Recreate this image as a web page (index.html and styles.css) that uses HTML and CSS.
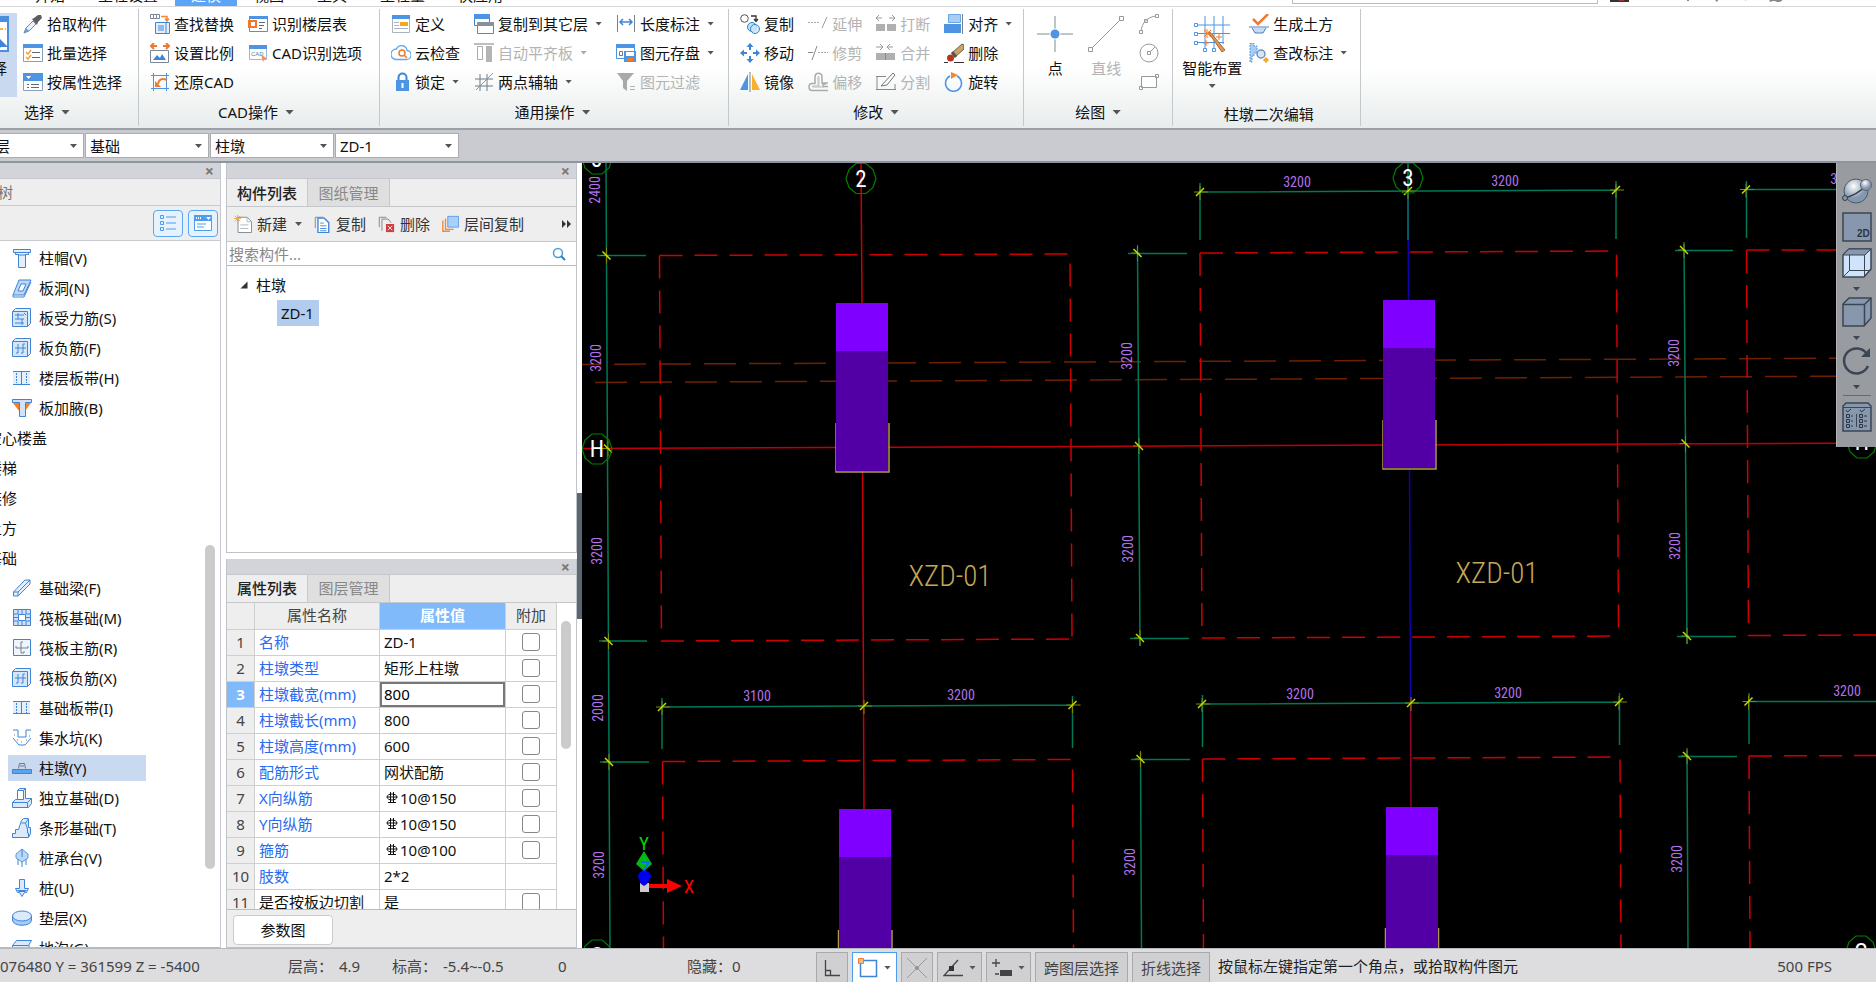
FILE: index.html
```html
<!DOCTYPE html>
<html lang="zh-CN">
<head>
    <meta charset="UTF-8">
    <meta name="viewport" content="width=device-width, initial-scale=1.0">
    <title>柱墩 ZD-1</title>
    <link rel="stylesheet" href="styles.css">
</head>
<body>
<div class="window">

    <!-- Menu tabs -->
    <nav class="tabs">
        <a href="#">开始</a>
        <a href="#">工程设置</a>
        <a href="#" class="active">建模</a>
        <a href="#">视图</a>
        <a href="#">工具</a>
        <a href="#">工程量</a>
        <a href="#">快应用</a>
        <div class="tabs-right">
            <span class="search-top"></span>
            <svg width="266" height="7" viewBox="0 0 266 7">
                <path d="M0 0h19v3H0z" fill="#3a3030"/><path d="M9 0h5v2H9z" fill="#a33"/>
                <path d="M24 0h4m3 0h4m3 0h4m3 0h4m3 0h4m3 0h6" stroke="#333" stroke-width="2"/>
                <path d="M77 0h2v2h-2zM104 0h5l-2 3zM134 2l4-2h2zM159 0h13v2l-3 1h-2l-2-1h-2l-3 1zM187 0h3v1h-3zM217 0h11v1h-11zM242 0h16v1h-16z" fill="#888"/>
            </svg>
        </div>
    </nav>

    <!-- Ribbon -->
    <header class="ribbon">
        <section class="group">
            <div class="group-body">
                <button class="big pressed">
                    <svg width="36" height="36" viewBox="0 0 36 36"><path d="M2 1h32v34H2z" fill="#fff" stroke="#4a8fdc" stroke-width="2"/><path d="M2 1h32v5H2z" fill="#4a8fdc"/><path d="M6 13h26" stroke="#f5b83d" stroke-width="2" stroke-dasharray="3 2"/><path d="M21 18l13 13h-7l-6 4z" fill="#3f84d6"/></svg>
                    <span>选择</span>
                </button>
                <div class="col">
                    <button class="tool"><svg class="icon" viewBox="0 0 20 20"><path d="M1 19l2-5 7-7 3 3-7 7z" fill="#e8f1fb" stroke="#7a8794"/><path d="M1 19l2-5 3 3z" fill="#5aa0ea"/><path d="M9 5l2-1 4-3 3 0 1 3-4 4-1 3z" fill="#5d5d5d"/></svg>拾取构件</button>
                    <button class="tool"><svg class="icon" viewBox="0 0 20 20"><path d="M.5 1.500h19v17H.5z" fill="#fff" stroke="#8aa0b8"/><path d="M0 1h20v4H0z" fill="#4d94e3"/><path d="M3 9l2 2 3-4M3 14l2 2 3-4" fill="none" stroke="#f2a33c" stroke-width="1.500"/><path d="M9 9.500h8M9 14.500h8" stroke="#5e6b78"/></svg>批量选择</button>
                    <button class="tool"><svg class="icon" viewBox="0 0 20 20"><path d="M.5 1.500h19v17H.5z" fill="#fff" stroke="#8aa0b8"/><path d="M0 1h20v8H0z" fill="#4d94e3"/><path d="M3 4h5L5.500 7z" fill="#fff"/><path d="M4 12.500h2m2 0h8M4 15.500h2m2 0h8" stroke="#5e6b78"/></svg>按属性选择</button>
                </div>
            </div>
            <button class="group-label left">选择<i class="caret big-caret"></i></button>
        </section>

        <section class="group cad">
            <div class="group-body">
                <div class="col">
                    <button class="tool"><svg class="icon" viewBox="0 0 20 20"><path d="M.5.5h9v4h-9zM3.500.5v4m3-4v4" fill="none" stroke="#7b8794"/><path d="M11 2.500h6v4m-2-2l2 2.500 2-2.500" fill="none" stroke="#ee8a3a" stroke-width="1.500"/><path d="M5.500 8.500h14v11h-14zM8 12h6m-6 2h6m-6 2h6m2-7v10" fill="#e4effc" stroke="#3f84d6"/></svg>查找替换</button>
                    <button class="tool"><svg class="icon" viewBox="0 0 20 20"><path d="M1 3h6M4 0L1 3l3 3M13 3h6m-3-3l3 3-3 3" fill="none" stroke="#f07830" stroke-width="2"/><path d="M.5 7.500h18v12H.5z" fill="#fff" stroke="#7b8794"/><path d="M3 17l4-5 3 3 2-4 4 6z" fill="#3f84d6"/></svg>设置比例</button>
                    <button class="tool"><svg class="icon" viewBox="0 0 20 20"><path d="M3.500 1v18M16.500 1v18M1 3.500h18M1 16.500h18" stroke="#4d94e3"/><path d="M5 9v6h6z" fill="#ee7a30"/><path d="M8 12c1-5 4-6 9-4" fill="none" stroke="#ee7a30" stroke-width="2"/></svg>还原CAD</button>
                </div>
                <div class="col">
                    <button class="tool"><svg class="icon" viewBox="0 0 20 20"><path d="M1.500 2.500h18v15h-18z" fill="#fff" stroke="#7b8794"/><path d="M1 2h19v3H1z" fill="#4d94e3"/><path d="M0 6h9v8H0z" fill="#f07830"/><path d="M3 8h4v4H3z" fill="#fff"/><path d="M11 8.500h6m-6 3h5m-5 3h3" stroke="#5e6b78"/></svg>识别楼层表</button>
                    <button class="tool"><svg class="icon" viewBox="0 0 20 20"><path d="M1.500 2.500h17v14h-17z" fill="#fff" stroke="#9db6d3"/><path d="M1 2h18v4H1z" fill="#4d94e3"/><text x="3" y="13" font-size="6" fill="#5b7da6" font-family="Liberation Sans">CAD</text><path d="M13 11l6 5-3 .5-1 3z" fill="#f09060"/></svg>CAD识别选项</button>
                </div>
            </div>
            <button class="group-label">CAD操作<i class="caret big-caret"></i></button>
        </section>

        <section class="group">
            <div class="group-body">
                <div class="col">
                    <button class="tool"><svg class="icon" viewBox="0 0 20 20"><path d="M1.500 1.500h17v17h-17z" fill="#fff" stroke="#a9b4c0"/><path d="M1 1h18v4H1z" fill="#4d94e3"/><path d="M3 8.500h5M3 11.500h5M3 14.500h14" stroke="#a9b4c0"/><path d="M9 8h8v4H9z" fill="#f5a623"/></svg>定义</button>
                    <button class="tool"><svg class="icon" viewBox="0 0 20 20"><path d="M5 16.500h10a4.500 4.500 0 0 0 1-9A5.500 5.500 0 0 0 5.500 6 5 5 0 0 0 5 16.500z" fill="#fff" stroke="#5fa8f0" stroke-width="1.300"/><circle cx="11" cy="10" r="3" fill="none" stroke="#f07830" stroke-width="1.500"/><path d="M13 12l3 3" stroke="#f07830" stroke-width="1.500"/></svg>云检查</button>
                    <button class="tool"><svg class="icon" viewBox="0 0 20 20"><path d="M7.500 9V5.500a4 4 0 0 1 8 0V9" fill="none" stroke="#3f84d6" stroke-width="2"/><path d="M5 8h13v11H5z" fill="#4d94e3"/><path d="M11.500 11v5" stroke="#fff" stroke-width="2"/></svg>锁定<i class="caret"></i></button>
                </div>
                <div class="col">
                    <button class="tool"><svg class="icon" viewBox="0 0 20 20"><path d="M.5.5h15v11H.5z" fill="#fff" stroke="#3f84d6"/><path d="M0 0h16v5H0z" fill="#4d94e3"/><path d="M3.500 8.500h16v11h-16z" fill="#fff" stroke="#77818b"/><path d="M3 8h17v4H3z" fill="#87919b"/></svg>复制到其它层<i class="caret"></i></button>
                    <button class="tool" disabled><svg class="icon" viewBox="0 0 20 20"><path d="M0 1h20" stroke="#aaa" stroke-width="1.500"/><path d="M3.500 3.500h5v13h-5z" fill="none" stroke="#aaa"/><path d="M12 3h6v16h-6z" fill="#b4b4b4"/></svg>自动平齐板<i class="caret"></i></button>
                    <button class="tool"><svg class="icon" viewBox="0 0 20 20"><path d="M6 2v17M13 2v17M1 7h18M1 14h18" stroke="#6d7a88"/><path d="M2 18L19 1" stroke="#f07830"/></svg>两点辅轴<i class="caret"></i></button>
                </div>
                <div class="col">
                    <button class="tool"><svg class="icon" viewBox="0 0 20 20"><path d="M1.500 1v17M18.500 1v17" stroke="#77818b"/><path d="M4 8h12M7 5L4 8l3 3M13 5l3 3-3 3" fill="none" stroke="#3f84d6" stroke-width="1.500"/></svg>长度标注<i class="caret"></i></button>
                    <button class="tool"><svg class="icon" viewBox="0 0 20 20"><path d="M.5 1.500h18v14H.5z" fill="#fff" stroke="#4d94e3"/><path d="M0 1h19v4H0z" fill="#4d94e3"/><path d="M3.500 8.500h3v4h-3z" fill="none" stroke="#6d7a88"/><path d="M8 8h12v11H8z" fill="#4d94e3"/><path d="M10 9h8v4h-8z" fill="#fff"/><path d="M11 15h6v3h-6z" fill="#f07830"/></svg>图元存盘<i class="caret"></i></button>
                    <button class="tool" disabled><svg class="icon" viewBox="0 0 20 20"><path d="M1 1h17l-7 8v10l-4-3V9z" fill="#a9a9a9"/><path d="M14 14.500h5m-5 3h5" stroke="#b4b4b4"/></svg>图元过滤</button>
                </div>
            </div>
            <button class="group-label">通用操作<i class="caret big-caret"></i></button>
        </section>

        <section class="group edit">
            <div class="group-body">
                <div class="col">
                    <button class="tool"><svg class="icon" viewBox="0 0 20 20"><circle cx="4.500" cy="4.500" r="3.800" fill="none" stroke="#555"/><path d="M11 2h5v5m-2-2l2 2.500L18 5" fill="none" stroke="#333" stroke-width="1.300"/><circle cx="12" cy="13" r="4.500" fill="#bfe0fa" stroke="#2e86c8"/><circle cx="15" cy="15" r="4.500" fill="#cfe8fb" fill-opacity=".8" stroke="#2e86c8"/></svg>复制</button>
                    <button class="tool"><svg class="icon" viewBox="0 0 20 20"><path d="M10 0l3.500 4h-7zM10 20l3.500-4h-7zM0 10l4-3.500v7zM20 10l-4-3.500v7z" fill="#3f84d6"/><path d="M10 3v4m0 6v4M3 10h4m6 0h4" stroke="#3f84d6" stroke-width="2"/></svg>移动</button>
                    <button class="tool"><svg class="icon" viewBox="0 0 20 20"><path d="M8 2v16H0z" fill="#4d94e3"/><path d="M10 0v20" stroke="#77818b"/><path d="M12 2v16h8z" fill="#f9b02c"/></svg>镜像</button>
                </div>
                <div class="col">
                    <button class="tool" disabled><svg class="icon" viewBox="0 0 20 20"><path d="M0 8.500h12" stroke="#aaa" stroke-dasharray="2 1"/><path d="M14 14l5-11" stroke="#999"/></svg>延伸</button>
                    <button class="tool" disabled><svg class="icon" viewBox="0 0 20 20"><path d="M0 9.500h5M4 17L9 3" stroke="#888"/><path d="M10 9.500h10" stroke="#aaa" stroke-dasharray="2 1"/></svg>修剪</button>
                    <button class="tool" disabled><svg class="icon" viewBox="0 0 20 20"><path d="M20 14.500h-5V12h3M20 18.500H4c-4 0-4-7 0-7h3V5c0-5 7-5 7 0v6h6" fill="none" stroke="#aaa" stroke-width="1.500"/><path d="M16 15H5c-1 0-1-1 0-1h5V5c0-1 1-1 1 0v10" fill="none" stroke="#bbb"/></svg>偏移</button>
                </div>
                <div class="col">
                    <button class="tool" disabled><svg class="icon" viewBox="0 0 20 20"><path d="M0 4h6M3 1L0 4l3 3M13 4h6m-3-3l3 3-3 3" fill="none" stroke="#999"/><path d="M0 10h9v7H0zm11 0h9v7h-9z" fill="#b0b0b0"/></svg>打断</button>
                    <button class="tool" disabled><svg class="icon" viewBox="0 0 20 20"><path d="M0 4h6M4 1l3 3-3 3M11 4h6m-3-3l-3 3 3 3" fill="none" stroke="#999"/><path d="M0 10h19v7H0z" fill="#b0b0b0"/><path d="M9.500 10v7" stroke="#888"/></svg>合并</button>
                    <button class="tool" disabled><svg class="icon" viewBox="0 0 20 20"><path d="M10 4.500H0m1 0v13h18V12M0 17.500h20" fill="none" stroke="#888"/><path d="M5 14L17 1l2 2-8 10z" fill="none" stroke="#777"/></svg>分割</button>
                </div>
                <div class="col">
                    <button class="tool"><svg class="icon" viewBox="0 0 20 20"><path d="M4.500.5h12v8h-12z" fill="#a8cdf5" stroke="#6ba6e6"/><path d="M0 10h17v9H0z" fill="#4d94e3"/><path d="M18.500 0v20" stroke="#77818b"/></svg>对齐<i class="caret"></i></button>
                    <button class="tool"><svg class="icon" viewBox="0 0 20 20"><path d="M0 19.500h4m6 0h10" stroke="#333"/><path d="M8 10L18 1l2 1v4l-9 8z" fill="#c9a56a" stroke="#6b5a3c"/><path d="M8 9l4 5" stroke="#555" stroke-width="3"/><ellipse cx="6.500" cy="15" rx="3.500" ry="3.500" fill="#b5371d"/></svg>删除</button>
                    <button class="tool"><svg class="icon" viewBox="0 0 20 20"><path d="M13 4a8 8 0 1 1-7 0" fill="none" stroke="#4d94e3" stroke-width="1.500"/><path d="M7 0l7 3-7 4z" fill="#f08a2c"/></svg>旋转</button>
                </div>
            </div>
            <button class="group-label">修改<i class="caret big-caret"></i></button>
        </section>

        <section class="group draw">
            <div class="group-body">
                <button class="big"><svg width="36" height="36" viewBox="0 0 36 36"><path d="M18 0v36M0 18h36" stroke="#7c8c94"/><circle cx="18" cy="18" r="5.500" fill="#fff"/><circle cx="18" cy="18" r="4.500" fill="#4d94e3"/></svg><span>点</span></button>
                <button class="big" disabled><svg width="36" height="36" viewBox="0 0 36 36"><path d="M4 32L32 4M.5 31.500h4v4h-4zM31.500.5h4v4h-4z" fill="#fff" stroke="#999"/></svg><span>直线</span></button>
                <div class="col">
                    <button class="tool" disabled aria-label="弧"><svg class="icon" viewBox="0 0 20 20"><path d="M2 17C3 9 8 3 17 2M.5 16.500h3v3h-3zM5.500 5.500h3v3h-3zM16.500.5h3v3h-3z" fill="none" stroke="#999"/></svg></button>
                    <button class="tool" disabled aria-label="圆"><svg class="icon" viewBox="0 0 20 20"><circle cx="10" cy="10" r="9" fill="none" stroke="#999"/><path d="M8.500 8.500h3v3h-3zM11 9l5-5" fill="none" stroke="#999"/></svg></button>
                    <button class="tool" disabled aria-label="矩形"><svg class="icon" viewBox="0 0 20 20"><path d="M2.500 4.500h15v11h-15zM.5 14.500h3v3h-3zM16.500 2.500h3v3h-3z" fill="#fff" stroke="#999"/></svg></button>
                </div>
            </div>
            <button class="group-label">绘图<i class="caret big-caret"></i></button>
        </section>

        <section class="group smart">
            <div class="group-body">
                <button class="big"><svg width="36" height="36" viewBox="0 0 36 36"><path d="M11 0v36M20 0v36M29 0v28M0 9h36M0 17.500h36M0 26.500h30" stroke="#4d94e3"/><path d="M.5 7.500h3v3h-3zm0 9h3v3h-3zm0 9h3v3h-3zm9 7h3v3h-3zm9 0h3v3h-3z" fill="#fff" stroke="#4d94e3"/><path d="M14 16l3 1 14 17-3 2z" fill="#d9975a" stroke="#a86a35"/><path d="M13 13v9M9 17.500h9M10 14l7 7m0-7l-7 7M25 18v6m-3-3h6M12 24v6m-3-3h6" stroke="#f07830"/></svg><span>智能布置</span><i class="caret"></i></button>
                <div class="col">
                    <button class="tool"><svg class="icon" viewBox="0 0 20 20"><path d="M4 5l5 5L19 0" fill="none" stroke="#f07830" stroke-width="2.500"/><path d="M0 13h20M3 14l3 5h8l3-5" fill="#c7dbf2" stroke="#4a7fbd"/></svg>生成土方</button>
                    <button class="tool"><svg class="icon" viewBox="0 0 20 20"><path d="M1 0h4v3h3v7H5v3H3v6H1z" fill="#a8cdf5" stroke="#5a9be0" stroke-dasharray="2 1"/><circle cx="12" cy="11" r="4" fill="#d7e6f7" stroke="#6f92bd" stroke-width="1.500"/><path d="M17 14l3 3-3 3-3-3z" fill="#f5a623"/></svg>查改标注<i class="caret"></i></button>
                </div>
            </div>
            <div class="group-label">柱墩二次编辑</div>
        </section>
    </header>

    <!-- Floor / category selectors -->
    <div class="combos">
        <select aria-label="楼层" class="floor"><option>首层</option></select>
        <select aria-label="分类"><option>基础</option></select>
        <select aria-label="构件类型"><option>柱墩</option></select>
        <select aria-label="构件"><option>ZD-1</option></select>
    </div>

    <main class="main">
        <!-- Navigation tree -->
        <aside class="nav">
            <div class="dock-bar"><button aria-label="关闭">×</button></div>
            <h2>导航树</h2>
            <div class="nav-tools">
                <button aria-label="列表"><svg width="18" height="18" viewBox="0 0 18 18"><path d="M1.500 1.500h3v3h-3zm0 6h3v3h-3zm0 6h3v3h-3zM7 3h10M7 9h10M7 15h10" fill="none" stroke="#4b9df0"/></svg></button>
                <button aria-label="面板"><svg width="18" height="18" viewBox="0 0 18 18"><path d="M.5 1.500h17v15H.5z" fill="#fff" stroke="#4b9df0"/><path d="M0 1h18v6H0z" fill="#4b9df0"/><path d="M2 4h1m1 0h1m1 0h1" stroke="#fff" stroke-width="2"/><path d="M12 3h5l-2.500 3z" fill="#fff"/><path d="M3 10h9m-9 3h7" stroke="#4b9df0"/></svg></button>
            </div>
            <div class="tree">
                <a href="#" class="leaf"><svg class="icon" viewBox="0 0 20 20"><path d="M1.500 1.500h17v3h-2v2h-3v13h-7v-13h-3v-2h-2z" fill="#e3effc" stroke="#3f84d6"/><path d="M3 4.500h14M6 7h8" stroke="#3f84d6"/></svg>柱帽(V)</a>
                <a href="#" class="leaf"><svg class="icon" viewBox="0 0 20 20"><path d="M7 2h12l-7 15H1z" fill="#bcd8f7" stroke="#3f84d6"/><path d="M9 6h5l-3 7H6z" fill="#fff" stroke="#3f84d6"/><path d="M1 17v2h11l7-15" fill="none" stroke="#3f84d6"/></svg>板洞(N)</a>
                <a href="#" class="leaf"><svg class="icon" viewBox="0 0 20 20"><path d="M.5 3.500l3-3h15v15l-3 3" fill="#e3effc" stroke="#3f84d6"/><path d="M.5 3.500h15v15H.5zM3 7h9m-9 4h9m-9 4h9M6 5v6m4 0v6M12 5l2 2" fill="#d5e6fa" stroke="#3f84d6"/></svg>板受力筋(S)</a>
                <a href="#" class="leaf"><svg class="icon" viewBox="0 0 20 20"><path d="M.5 3.500l3-3h15v15l-3 3" fill="#e3effc" stroke="#3f84d6"/><path d="M.5 3.500h15v15H.5z" fill="#d5e6fa" stroke="#3f84d6"/><path d="M6 6v9H4m7-9v9H9M3 10h11M11 6h2" fill="none" stroke="#3f84d6"/></svg>板负筋(F)</a>
                <a href="#" class="leaf"><svg class="icon" viewBox="0 0 20 20"><path d="M1 3h17v14H1z" fill="#e3effc"/><path d="M1 3.500h17M1 16.500h17M9.500 3v14" stroke="#3f84d6"/><path d="M4.500 5v10m10-10v10" stroke="#3f84d6" stroke-dasharray="2 1"/></svg>楼层板带(H)</a>
                <a href="#" class="leaf"><svg class="icon" viewBox="0 0 20 20"><path d="M1 5h18l-6 8V6H7v7z" fill="#f58220"/><path d="M.5 1.500h19v3h-6v14h-6v-14h-7z" fill="#cfe2f9" stroke="#3f84d6"/></svg>板加腋(B)</a>
                <a href="#">空心楼盖</a>
                <a href="#">楼梯</a>
                <a href="#">装修</a>
                <a href="#">土方</a>
                <a href="#">基础</a>
                <a href="#" class="leaf"><svg class="icon" viewBox="0 0 20 20"><path d="M1.500 14L13 2h5v4L6 18H1.500zM1.500 14H6v4M6 14L18 2" fill="#e3effc" stroke="#3f84d6"/></svg>基础梁(F)</a>
                <a href="#" class="leaf"><svg class="icon" viewBox="0 0 20 20"><path d="M1.500 1.500h17v16h-17z" fill="#cfe2f9" stroke="#3f84d6"/><path d="M6.500 6.500h7v6h-7zM6 2v4M10 2v4m4-4v4M6 13v4m4-4v4m4-4v4M2 6h4M2 9.500h4M2 13h4m8-7h4m-4 3.500h4M14 13h4" fill="#fff" stroke="#3f84d6"/></svg>筏板基础(M)</a>
                <a href="#" class="leaf"><svg class="icon" viewBox="0 0 20 20"><path d="M1.500 1.500h17v16h-17z" fill="#eef5fd" stroke="#3f84d6"/><path d="M4 8v2h12V8M11 4H9v11h3v-2" fill="none" stroke="#77818b"/></svg>筏板主筋(R)</a>
                <a href="#" class="leaf"><svg class="icon" viewBox="0 0 20 20"><path d="M.5 3.500l3-3h15v15l-3 3" fill="#e3effc" stroke="#3f84d6"/><path d="M.5 3.500h15v15H.5z" fill="#d5e6fa" stroke="#3f84d6"/><path d="M6 6v9H4m7-9v9H9M3 10h11M11 6h2" fill="none" stroke="#3f84d6"/></svg>筏板负筋(X)</a>
                <a href="#" class="leaf"><svg class="icon" viewBox="0 0 20 20"><path d="M1 3h17v13H1z" fill="#e3effc"/><path d="M1 3.500h17M1 15.500h17M9.500 3v13" stroke="#3f84d6"/><path d="M4.500 5v10m10-10v10" stroke="#3f84d6" stroke-dasharray="2 1"/></svg>基础板带(I)</a>
                <a href="#" class="leaf"><svg class="icon" viewBox="0 0 20 20"><path d="M1 2h5v7h8V2h5M1 10l6 7h6l6-7" fill="none" stroke="#3f84d6"/><path d="M2 7h1m2 5h1m3 2h1m4-2h1m2-4h1" stroke="#777"/></svg>集水坑(K)</a>
                <a href="#" class="leaf selected"><svg class="icon" viewBox="0 0 20 20"><path d="M6.500 10.500l1-5h5l1 5M8 8h4" fill="none" stroke="#6d7a88"/><path d="M.5 11.500h19v4H.5z" fill="#5ba3ea" stroke="#3f84d6"/></svg>柱墩(Y)</a>
                <a href="#" class="leaf"><svg class="icon" viewBox="0 0 20 20"><path d="M.5 14.500l3-3h2v-9l2-2h6v10h6v5l-3 4H.5zM.5 14.500h15v5M15.500 14.500l4-4M5.500 11.500h6v-9h-6m6 0l2-2" fill="#dbeafb" stroke="#3f84d6"/></svg>独立基础(D)</a>
                <a href="#" class="leaf"><svg class="icon" viewBox="0 0 20 20"><path d="M.5 19.500v-4h3v-4h3l3-9 2-2h5v9h2v6l-2 4z" fill="#dbeafb" stroke="#3f84d6"/><path d="M9.500 5h4l2 6v4h1v4M13.500 5l3-4" fill="none" stroke="#3f84d6"/></svg>条形基础(T)</a>
                <a href="#" class="leaf"><svg class="icon" viewBox="0 0 20 20"><path d="M10 1l6 5v4l-6 4-6-4V6z" fill="#bcd8f7" stroke="#5b9be6"/><path d="M10 1v8M6 11v6m4-4v6m4-8v6" stroke="#3f84d6"/></svg>桩承台(V)</a>
                <a href="#" class="leaf"><svg class="icon" viewBox="0 0 20 20"><path d="M7.500 1.500h5v9h4l-2 4h-2l-2.500 4-2.500-4h-2l-2-4h4z" fill="#dbeafb" stroke="#3f84d6"/><path d="M5 12h10l-2 2H7z" fill="#3f84d6"/></svg>桩(U)</a>
                <a href="#" class="leaf"><svg class="icon" viewBox="0 0 20 20"><path d="M.5 8v4c0 7 19 7 19 0V8" fill="#a8cdf5" stroke="#3f84d6"/><ellipse cx="10" cy="8" rx="9.500" ry="5" fill="#dbeafb" stroke="#3f84d6"/></svg>垫层(X)</a>
                <a href="#" class="leaf"><svg class="icon" viewBox="0 0 20 20"><path d="M.5 7.500l4-5h15l-3 5zM.5 7.500v9h13l4-9" fill="#dbeafb" stroke="#3f84d6"/></svg>地沟(G)</a>
                <i class="thumb"></i>
            </div>
        </aside>

        <div class="docks">
            <!-- Component list -->
            <section class="dock">
                <div class="dock-bar"><button aria-label="关闭">×</button></div>
                <div class="dock-tabs"><button class="on">构件列表</button><button>图纸管理</button></div>
                <div class="dock-tools">
                    <button><svg class="icon" viewBox="0 0 20 20"><path d="M4.500 2.500h10l5 5v12h-15z" fill="#fff" stroke="#77818b"/><path d="M14.500 2.500v5h5M7 11h9m-9 4h9" fill="none" stroke="#a9b4c0"/><path d="M4 0v8M0 4h8M1 1l6 6m0-6L1 7" stroke="#f5a02c"/></svg>新建<i class="caret"></i></button>
                    <button><svg class="icon" viewBox="0 0 20 20"><path d="M2.500 14.500v-12h9" fill="none" stroke="#77818b"/><path d="M5.500 3.500h7l5 5v11h-12z" fill="#fff" stroke="#3f84d6" stroke-width="1.500"/><path d="M8 9h4m-4 3h7m-7 3h7m-7 2.500h7" stroke="#3f84d6"/></svg>复制</button>
                    <button><svg class="icon" viewBox="0 0 20 20"><path d="M2.500 13.500v-11h8M5.500 17.500v-13h7l3 4" fill="none" stroke="#77818b"/><path d="M10 10h9v9h-9z" fill="#cf3c3c"/><path d="M12 12l5 5m0-5l-5 5" stroke="#fff"/></svg>删除</button>
                    <button><svg class="icon" viewBox="0 0 20 20"><path d="M2 6v12h8M5 4v12h9" fill="none" stroke="#ee8a3a" stroke-width="1.500"/><path d="M7.500 1.500h12v12h-12z" fill="#a8d0fb" stroke="#5b9be6"/></svg>层间复制</button>
                    <button class="more" aria-label="更多"><svg width="10" height="8" viewBox="0 0 10 8"><path d="M0 0l4 4-4 4zM5 0l4 4-4 4z" fill="#333"/></svg></button>
                </div>
                <div class="search">
                    <input type="text" placeholder="搜索构件..." aria-label="搜索构件">
                    <svg width="14" height="14" viewBox="0 0 14 14"><circle cx="6" cy="6" r="4.500" fill="none" stroke="#4a9fd8" stroke-width="1.500"/><path d="M9 9l4 4" stroke="#2a7fc0" stroke-width="2"/></svg>
                </div>
                <div class="parts">
                    <div><svg width="8" height="8" viewBox="0 0 8 8"><path d="M7.500.5v7h-7z" fill="#333"/></svg>柱墩</div>
                    <a href="#">ZD-1</a>
                </div>
            </section>

            <!-- Properties -->
            <section class="dock props">
                <div class="dock-bar"><button aria-label="关闭">×</button></div>
                <div class="dock-tabs"><button class="on">属性列表</button><button>图层管理</button></div>
                <div class="table-wrap">
                    <table>
                        <thead><tr><th class="n"></th><th class="k">属性名称</th><th class="v active">属性值</th><th class="c">附加</th></tr></thead>
                        <tbody>
                            <tr><th>1</th><td>名称</td><td>ZD-1</td><td><input type="checkbox" aria-label="名称附加"></td></tr>
                            <tr><th>2</th><td>柱墩类型</td><td>矩形上柱墩</td><td><input type="checkbox" aria-label="柱墩类型附加"></td></tr>
                            <tr class="current"><th>3</th><td>柱墩截宽(mm)</td><td><input type="text" value="800" aria-label="柱墩截宽"></td><td><input type="checkbox" aria-label="柱墩截宽附加"></td></tr>
                            <tr><th>4</th><td>柱墩截长(mm)</td><td>800</td><td><input type="checkbox" aria-label="柱墩截长附加"></td></tr>
                            <tr><th>5</th><td>柱墩高度(mm)</td><td>600</td><td><input type="checkbox" aria-label="柱墩高度附加"></td></tr>
                            <tr><th>6</th><td>配筋形式</td><td>网状配筋</td><td><input type="checkbox" aria-label="配筋形式附加"></td></tr>
                            <tr><th>7</th><td>X向纵筋</td><td><svg class="rebar" viewBox="0 0 12 12"><path d="M4.500 0v11M7.500 0v11M2 10.500h8" stroke="#111"/><ellipse cx="6" cy="5" rx="5" ry="3" fill="none" stroke="#111"/><path d="M1 5h10" stroke="#111"/></svg>10@150</td><td><input type="checkbox" aria-label="X向纵筋附加"></td></tr>
                            <tr><th>8</th><td>Y向纵筋</td><td><svg class="rebar" viewBox="0 0 12 12"><path d="M4.500 0v11M7.500 0v11M2 10.500h8" stroke="#111"/><ellipse cx="6" cy="5" rx="5" ry="3" fill="none" stroke="#111"/><path d="M1 5h10" stroke="#111"/></svg>10@150</td><td><input type="checkbox" aria-label="Y向纵筋附加"></td></tr>
                            <tr><th>9</th><td>箍筋</td><td><svg class="rebar" viewBox="0 0 12 12"><path d="M4.500 0v11M7.500 0v11M2 10.500h8" stroke="#111"/><ellipse cx="6" cy="5" rx="5" ry="3" fill="none" stroke="#111"/><path d="M1 5h10" stroke="#111"/></svg>10@100</td><td><input type="checkbox" aria-label="箍筋附加"></td></tr>
                            <tr><th>10</th><td>肢数</td><td>2*2</td><td></td></tr>
                            <tr><th>11</th><td class="plain">是否按板边切割</td><td>是</td><td><input type="checkbox" aria-label="是否按板边切割附加"></td></tr>
                        </tbody>
                    </table>
                    <i class="thumb"></i>
                </div>
                <div class="props-foot"><button>参数图</button></div>
            </section>
        </div>

        <div class="splitter"><i></i></div>

        <!-- Drawing area -->
        <div class="canvas">
            <svg class="plan" viewBox="582 163 1294 785" preserveAspectRatio="xMinYMin slice">
                <defs>
                    <g id="tick"><path d="M-6 0h14M0 -6v14" stroke="#7d8a00" stroke-width="1"/><path d="M-4 4L4 -4" stroke="#c8e000" stroke-width="1.500"/></g>
                    <g id="vtick"><path d="M0 -8v16M-6 0h8" stroke="#7d8a00" stroke-width="1"/><path d="M-4 -4L4 4" stroke="#c8e000" stroke-width="1.500"/></g>
                    <path id="bubble" d="M-5 -15H5L12 -9 15 0 12 9 5 15H-5L-12 9 -15 0 -12 -9z" fill="none" stroke="#008000" stroke-width="1.200"/>
                </defs>

                <!-- walls and bases -->
                <g class="brown">
                    <path d="M569 364.500L1876 358"/>
                    <path d="M595 382.500L1876 376"/>
                </g>
                <g class="base">
                    <path d="M659.500 255.500L1070 254L1072 639"/>
                    <path d="M659.500 255.500L661.500 641L1072 639"/>
                    <path d="M1200 253L1616.500 251L1618.500 636"/>
                    <path d="M1200 253L1202 638L1618.500 636"/>
                    <path d="M1746.500 250H1876"/>
                    <path d="M1746.500 250L1748.500 635.500L1876 635"/>
                    <path d="M662.500 761.500L1072.500 759.500L1073.500 948"/>
                    <path d="M662.500 761.500L663.500 948"/>
                    <path d="M1202.500 759L1620 757L1621 948"/>
                    <path d="M1202.500 759L1203.500 948"/>
                    <path d="M1749 756L1876 755.500M1749 756L1750 948"/>
                </g>

                <!-- axes -->
                <g fill="none" stroke-width="1.500">
                    <path d="M582 448.500L1876 443" stroke="#c00008"/>
                    <path d="M861 163L862 303M862.500 471L864 809" stroke="#c80008"/>
                    <path d="M1408 163v30" stroke="#008060"/>
                    <path d="M1408 193L1408.500 300M1409.500 469L1410.500 700" stroke="#1000b0"/>
                    <path d="M1410.500 700L1411 807" stroke="#900030"/>
                </g>

                <!-- dimension lines -->
                <g class="dim-line">
                    <path d="M606 163L610 948M597 255.500h49M599 641h48M600 762h49"/>
                    <path d="M1137.500 247L1140 646M1128 253.500h59M1130 638.500h59M1140.500 752L1141.500 948M1131 759.500h59"/>
                    <path d="M1684 244L1687 644M1675 250.500h58M1677 636.500h59M1687 750L1688 948M1678 756.500h59"/>
                    <path d="M1200 192L1616 190M1200 183v57M1616 181v58M1408 182v58"/>
                    <path d="M1746 189.500H1876M1746.500 181v57"/>
                    <path d="M662 707L1072.500 705M662 698v51M1072.500 696v52"/>
                    <path d="M1202 704L1619 702M1202.500 695v52M1619.500 693v52"/>
                    <path d="M1748.500 701.500H1876M1749 693v51"/>
                </g>
                <use href="#vtick" x="606.5" y="255.5"/><use href="#vtick" x="608" y="448.5"/><use href="#vtick" x="608.5" y="641"/><use href="#vtick" x="609" y="762"/>
                <use href="#vtick" x="1137.5" y="253"/><use href="#vtick" x="1139" y="446"/><use href="#vtick" x="1140" y="638"/><use href="#vtick" x="1140.5" y="759"/>
                <use href="#vtick" x="1684" y="250"/><use href="#vtick" x="1685.5" y="443.500"/><use href="#vtick" x="1687" y="636"/><use href="#vtick" x="1687" y="756"/>
                <use href="#tick" x="1200" y="192"/><use href="#tick" x="1408" y="191"/><use href="#tick" x="1616" y="190"/><use href="#tick" x="1746" y="189.500"/>
                <use href="#tick" x="662" y="707"/><use href="#tick" x="864" y="706"/><use href="#tick" x="1072.500" y="705"/>
                <use href="#tick" x="1202" y="704"/><use href="#tick" x="1411" y="703"/><use href="#tick" x="1619" y="702"/><use href="#tick" x="1748.500" y="701.500"/>

                <g class="dim">
                    <text x="1297" y="187">3200</text><text x="1505" y="186">3200</text><text x="1844" y="184">3200</text>
                    <text x="757" y="701">3100</text><text x="961" y="700">3200</text>
                    <text x="1300" y="699">3200</text><text x="1508" y="698">3200</text><text x="1847" y="696">3200</text>
                    <text transform="translate(600 190) rotate(-90)">2400</text>
                    <text transform="translate(601 358) rotate(-90)">3200</text>
                    <text transform="translate(602 551) rotate(-90)">3200</text>
                    <text transform="translate(603 708) rotate(-90)">2000</text>
                    <text transform="translate(604 865) rotate(-90)">3200</text>
                    <text transform="translate(1132 356) rotate(-90)">3200</text>
                    <text transform="translate(1133 549) rotate(-90)">3200</text>
                    <text transform="translate(1135 862) rotate(-90)">3200</text>
                    <text transform="translate(1679 353) rotate(-90)">3200</text>
                    <text transform="translate(1680 546) rotate(-90)">3200</text>
                    <text transform="translate(1682 859) rotate(-90)">3200</text>
                </g>

                <!-- column piers -->
                <g fill="none" stroke="#b09a48" stroke-width="1.500">
                    <path d="M836 423v49h53v-49M1383 420v49h53v-49M838.500 930v20M892 930v20M1385.500 928v20M1438.500 928v20"/>
                </g>
                <g fill="#5200a5">
                    <path d="M836 303h52v168h-52zM1383 300h52v168h-52zM839 809h52v139h-52zM1386 807h52v141h-52z"/>
                </g>
                <g fill="#8000ff">
                    <path d="M836 303h52v48h-52zM1383 300h52v48h-52zM839 809h52v48h-52zM1386 807h52v48h-52z"/>
                </g>
                <g class="mark"><text x="950" y="586">XZD-01</text><text x="1497" y="583">XZD-01</text></g>

                <!-- axis bubbles -->
                <use href="#bubble" x="861" y="178.500"/><use href="#bubble" x="1408" y="178"/>
                <use href="#bubble" x="597" y="449"/><use href="#bubble" x="597" y="159"/><use href="#bubble" x="597" y="955"/>
                <use href="#bubble" x="1862" y="443"/><use href="#bubble" x="1861" y="951"/>
                <g class="axis">
                    <text x="861" y="187">2</text><text x="1408" y="186">3</text>
                    <text x="597" y="457">H</text><text x="597" y="167">J</text><text x="597" y="964">G</text>
                    <text x="1862" y="450">H</text><text x="1861" y="960">G</text>
                </g>

                <!-- coordinate gizmo -->
                <path d="M649 884h18v-5l15 7-15 7v-5h-18z" fill="#f00"/>
                <path d="M644 851l8 13-8 7-8-7z" fill="#00b818"/>
                <path d="M641 862h8l-6 10" fill="none" stroke="#0a6cff" stroke-width="2"/>
                <path d="M640 883h9v9h-9z" fill="#ccc"/>
                <path d="M638 877a6.500 6.500 0 0 1 13 0l-4 7-3 2-3-2z" fill="#0000f0"/>
                <g class="gizmo"><text x="644" y="850" fill="#00d800">Y</text><text x="689" y="893" fill="#f00">X</text></g>
            </svg>

            <div class="view-bar">
                <button aria-label="三维动态"><svg width="30" height="30" viewBox="0 0 30 30"><defs><radialGradient id="ball" cx=".4" cy=".3"><stop offset="0" stop-color="#fff"/><stop offset="1" stop-color="#8497ae"/></radialGradient></defs><circle cx="14" cy="15" r="12" fill="url(#ball)" stroke="#4c5866"/><path d="M2 22C12 20 20 14 25 9" fill="none" stroke="#333f4c" stroke-width="1.500"/><circle cx="24" cy="9" r="5.500" fill="url(#ball)" stroke="#5a6674"/><circle cx="3" cy="22" r="2.500" fill="#8a95a3" stroke="#333f4c"/></svg></button>
                <button aria-label="二维"><svg width="30" height="30" viewBox="0 0 30 30"><path d="M1 1h28v28H1z" fill="#8797ae" stroke="#3b4654" stroke-width="1.500"/><text x="15" y="25" font-size="10" font-weight="bold" fill="#2b3440" font-family="Liberation Sans">2D</text></svg></button>
                <button aria-label="线框"><svg width="30" height="30" viewBox="0 0 30 30"><path d="M1 7l6-6h22v20l-7 8H1z" fill="#cfe4fb" stroke="#3b4654" stroke-width="1.500"/><path d="M1 7l6-6h22l-6 6z" fill="#8797ae" stroke="#3b4654"/><path d="M22.500 7v22M7.500 7v15M7 22.500h22M1 29l6-6" stroke="#3b4654"/></svg><i class="caret"></i></button>
                <button aria-label="实体"><svg width="30" height="30" viewBox="0 0 30 30"><path d="M1 7l6-6h22v20l-7 8H1z" fill="#8797ae" stroke="#3b4654" stroke-width="1.500"/><path d="M1 7.500h21.500V29M22.500 7.500L29 1" fill="none" stroke="#3b4654" stroke-width="1.500"/></svg><i class="caret"></i></button>
                <button aria-label="旋转视图"><svg width="30" height="30" viewBox="0 0 30 30"><path d="M25 8A12.500 12.500 0 1 0 26 20" fill="none" stroke="#3b4654" stroke-width="2.500"/><path d="M28 2v9h-9z" fill="#3b4654"/></svg><i class="caret"></i></button>
                <hr>
                <button aria-label="显示设置"><svg width="30" height="30" viewBox="0 0 30 30"><path d="M1 4l3-3h22l3 3v25H1z" fill="#8797ae" stroke="#3b4654" stroke-width="1.500"/><path d="M1 5.500h28M14.500 12v13" stroke="#3b4654"/><path d="M4.500 12.500h3v3h-3zm0 5h3v3h-3zm0 5h3v3h-3zm13-10h3v3h-3zm0 5h3v3h-3zm0 5h3v3h-3zM9 14h2m-2 5h2m-2 5h2m11-10h3m-3 5h3m-3 5h3M4 8l1.500 2L9 7m9 1l1.500 2L23 7" fill="none" stroke="#2b3440"/></svg></button>
            </div>
        </div>
    </main>

    <footer class="status">
        <span class="coords">076480 Y = 361599 Z = -5400</span>
        <span class="level">层高：<b>4.9</b></span>
        <span class="elev">标高：<b>-5.4~-0.5</b></span>
        <span class="zero">0</span>
        <span class="hidden-count">隐藏：0</span>
        <div class="snap">
            <button aria-label="正交"><svg width="20" height="20" viewBox="0 0 20 20"><path d="M3.500 2v15.500H18M3.500 12.500h5v5" fill="none" stroke="#444" stroke-width="1.300"/></svg></button>
            <button class="on" aria-label="捕捉"><svg width="20" height="20" viewBox="0 0 20 20"><path d="M2.500 2.500h16v16h-16z" fill="#fff" stroke="#3f84d6" stroke-width="1.500"/><path d="M.5.5h5v5h-5z" fill="#f9b98a" stroke="#f07830"/></svg><i class="caret"></i></button>
            <button disabled aria-label="交点"><svg width="20" height="20" viewBox="0 0 20 20"><path d="M0 0l20 20M20 0L0 20" stroke="#999"/><path d="M8 8h4v4H8z" fill="#999"/></svg></button>
            <button aria-label="角度"><svg width="20" height="20" viewBox="0 0 20 20"><path d="M15 2L1 17.500h19" fill="none" stroke="#444" stroke-width="1.300"/><path d="M6 8h5v5H6z" fill="#333"/></svg><i class="caret"></i></button>
            <button aria-label="偏移输入"><svg width="20" height="20" viewBox="0 0 20 20"><path d="M4 1v8M0 5h8M3 16h4" stroke="#444" stroke-width="1.300"/><path d="M8 12h12v6H8z" fill="#444"/></svg><i class="caret"></i></button>
            <button class="wide">跨图层选择</button>
            <button class="wide">折线选择</button>
        </div>
        <span class="hint">按鼠标左键指定第一个角点，或拾取构件图元</span>
        <span class="fps">500 FPS</span>
    </footer>
</div>
</body>
</html>
```
FILE: styles.css
```css
* {
    box-sizing: border-box;
}
body {
    margin: 0;
    overflow: hidden;
    background-color: #fff;
    color: #111;
    font-family: "Noto Sans", "Noto Sans CJK SC", sans-serif;
    font-size: 15px;
    line-height: 20px;
}
button {
    margin: 0;
    padding: 0;
    border: 0;
    background: none;
    font: inherit;
    color: inherit;
    white-space: nowrap;
}
a {
    color: inherit;
    text-decoration: none;
}
i {
    font-style: normal;
}
svg {
    flex: none;
}
.window {
    margin-left: -40px;
    height: 100vh;
    display: flex;
    flex-direction: column;
}
.icon {
    width: 20px;
    height: 20px;
}
.caret {
    width: 7px;
    height: 4px;
    margin-left: 3px;
    background-color: #555;
    clip-path: polygon(0 0, 100% 0, 50% 100%);
}
.big-caret {
    width: 9px;
    height: 5px;
}

/* tabs */
.tabs {
    display: flex;
    align-items: flex-end;
    gap: 1px;
    height: 7px;
    padding-left: 59px;
    overflow: hidden;
    border-bottom: 1px solid #d8d8d8;
}
.tabs a {
    padding: 0 16px;
    line-height: 22px;
}
.tabs .active {
    background-color: #5aa5f7;
    color: #fff;
}
.tabs-right {
    display: flex;
    align-items: flex-start;
    gap: 12px;
    height: 7px;
    margin-left: auto;
}
.search-top {
    width: 306px;
    height: 5px;
    border: 1px solid #bbb;
    border-top: 0;
}

/* ribbon */
.ribbon {
    display: flex;
    height: 123px;
    padding: 2px 0 2px 7px;
    border-bottom: 2px solid #9b9fa6;
    background: linear-gradient(#fff 50%, #e8ecec);
}
.group {
    display: flex;
    flex-direction: column;
    padding: 0 14px 0 11px;
    border-right: 1px solid #c4c8ca;
}
.group:first-child {
    padding: 0 16px 0 0;
}
.cad {
    padding-right: 17px;
}
.edit {
    padding-right: 11px;
}
.group-body {
    display: flex;
    flex: 1;
    gap: 14px;
}
.group:first-child .group-body {
    gap: 6px;
}
.col {
    display: flex;
    flex-direction: column;
}
.tool {
    display: flex;
    align-items: center;
    gap: 4px;
    height: 29px;
}
.tool:disabled,
.big:disabled {
    color: #b3b3b3;
}
.tool:disabled .caret {
    background-color: #aaa;
}
.group-label {
    display: flex;
    align-items: center;
    justify-content: center;
    gap: 4px;
    height: 28px;
}
.group-label.left {
    padding-left: 5px;
}
.big {
    display: flex;
    flex-direction: column;
    align-items: center;
    gap: 6px;
    height: 84px;
    margin-top: 4px;
    padding: 3px 0 0;
}
.big .caret {
    margin: 0;
}
.pressed {
    width: 50px;
    background-color: #c9d9f0;
}
.draw {
    padding: 0 13px;
}
.draw .big {
    min-width: 36px;
}
.draw .group-body {
    gap: 15px;
}
.smart {
    padding: 0 13px 0 9px;
}
.smart .group-body {
    gap: 7px;
}
.smart .group-label {
    padding: 4px 0 0 8px;
}

/* selectors */
.combos {
    display: flex;
    gap: 1px;
    height: 33px;
    padding: 3px 0 3px 15px;
    background-color: #c9cbd0;
    border-bottom: 2px solid #8d959f;
}
.combos select {
    appearance: none;
    width: 124px;
    padding: 0 4px;
    border: 1px solid #aaacb0;
    border-radius: 0;
    color: #111;
    font: inherit;
    background: #fff url("data:image/svg+xml,%3Csvg xmlns='http://www.w3.org/2000/svg' width='7' height='4'%3E%3Cpath d='M0 0h7L3.500 4z' fill='%23555'/%3E%3C/svg%3E") no-repeat right 6px center;
}
.combos .floor {
    width: 109px;
}

.main {
    display: flex;
    flex: 1;
    min-height: 0;
}
.dock-bar {
    display: flex;
    flex: none;
    justify-content: flex-end;
    height: 16px;
    padding-right: 6px;
    background-color: #d3d4d9;
    border-bottom: 1px solid #c4c7cc;
}
.dock-bar button {
    color: #777;
    font-size: 16px;
    font-weight: bold;
    line-height: 16px;
}
.thumb {
    position: absolute;
    right: 5px;
    width: 10px;
    border-radius: 5px;
    background-color: #cbcbcb;
}

/* navigation tree */
.nav {
    display: flex;
    flex-direction: column;
    width: 261px;
    margin-right: 5px;
    border-right: 1px solid #c6cad0;
}
.nav h2 {
    margin: 0;
    padding-left: 8px;
    color: #777;
    font-size: 15px;
    font-weight: normal;
    line-height: 26px;
    background-color: #eee;
    border-bottom: 1px solid #c8cace;
}
.nav-tools {
    display: flex;
    justify-content: flex-end;
    align-items: center;
    gap: 5px;
    height: 35px;
    padding-right: 2px;
    background-color: #eee;
    border-bottom: 1px solid #c8cace;
}
.nav-tools button {
    display: flex;
    align-items: center;
    justify-content: center;
    width: 30px;
    height: 27px;
    border: 1px solid #58a6f5;
    border-radius: 4px;
    background-color: #e6f2fe;
}
.tree {
    position: relative;
    flex: 1;
    min-height: 0;
    padding: 2px 0 0 27px;
    overflow: hidden;
    border-bottom: 1px solid #b8bcc2;
}
.tree a {
    display: flex;
    align-items: center;
    height: 26px;
    margin: 2px 0 4px;
}
.tree .leaf {
    gap: 7px;
    width: 138px;
    margin-left: 21px;
    padding-left: 4px;
    white-space: nowrap;
}
.tree .selected {
    background-color: #c8d9f0;
}
.tree .thumb {
    top: 43%;
    height: 46%;
}

/* docked lists */
.docks {
    display: flex;
    flex-direction: column;
    gap: 6px;
    width: 351px;
}
.dock {
    display: flex;
    flex: 1;
    flex-direction: column;
    min-height: 0;
    border: 1px solid #bfc3c8;
    border-top: 0;
}
.dock-tabs {
    display: flex;
    flex: none;
    height: 28px;
    background-color: #eee;
    border-bottom: 1px solid #c4c7cc;
}
.dock-tabs button {
    width: 82px;
    color: #888;
    background-color: #dfdfdf;
    border-right: 1px solid #c4c7cc;
}
.dock-tabs .on {
    width: 81px;
    color: #222;
    font-weight: 500;
    background-color: #eee;
}
.dock-tools {
    display: flex;
    align-items: center;
    gap: 11px;
    height: 35px;
    padding: 0 4px 0 7px;
    color: #333;
    background-color: #eee;
    border-bottom: 1px solid #c4c7cc;
}
.dock-tools button {
    display: flex;
    align-items: center;
    gap: 5px;
}
.dock-tools .icon {
    width: 18px;
    height: 18px;
}
.dock-tools .more {
    margin-left: auto;
}
.search {
    display: flex;
    align-items: center;
    height: 24px;
    padding: 0 10px 0 2px;
    border-bottom: 1px solid #b9bdc3;
}
.search input {
    flex: 1;
    padding: 0;
    border: 0;
    outline: 0;
    font: inherit;
}
.search input::placeholder {
    color: #888;
}
.parts {
    flex: 1;
    padding: 4px 0 0 13px;
}
.parts div {
    display: flex;
    align-items: center;
    gap: 8px;
    height: 30px;
}
.parts a {
    display: inline-block;
    margin-left: 37px;
    padding: 0 5px 0 4px;
    line-height: 26px;
    background-color: #b1ccee;
}

/* properties */
.table-wrap {
    position: relative;
    flex: 1;
    min-height: 0;
    overflow: hidden;
}
.table-wrap .thumb {
    top: 18px;
    height: 42%;
}
table {
    width: 330px;
    table-layout: fixed;
    border-spacing: 0;
}
th,
td {
    height: 26px;
    padding: 0 0 0 4px;
    line-height: 25px;
    border-right: 1px solid #cfcfcf;
    border-bottom: 1px solid #cfcfcf;
    white-space: nowrap;
}
th {
    padding: 0;
    color: #444;
    font-weight: normal;
    background-color: #eee;
}
thead th {
    height: 27px;
}
.n {
    width: 28px;
}
.k {
    width: 125px;
}
.v {
    width: 126px;
}
.c {
    width: 51px;
}
thead .active,
.current th {
    color: #fff;
    font-weight: bold;
    background-color: #80bafa;
}
td:nth-child(2) {
    color: #2a6af0;
}
td.plain {
    color: #111;
}
td:last-child {
    padding: 0;
}
td input[type="text"] {
    display: block;
    width: 125px;
    height: 25px;
    margin-left: -4px;
    padding: 0 2px;
    border: 2px solid #777;
    outline: 0;
    font: inherit;
}
td input[type="checkbox"] {
    appearance: none;
    display: block;
    width: 18px;
    height: 18px;
    margin: 0 auto;
    border: 1px solid #888;
    border-radius: 3px;
    background-color: #fff;
}
.rebar {
    width: 12px;
    height: 12px;
    margin: 0 2px;
}
.props-foot {
    flex: none;
    padding: 5px 6px 2px;
    background-color: #eee;
    border-top: 1px solid #b9bdc3;
}
.props-foot button {
    width: 100px;
    height: 30px;
    border: 1px solid #ccc;
    border-radius: 4px;
    background-color: #fff;
}
.splitter {
    display: flex;
    align-items: center;
    width: 5px;
}
.splitter i {
    width: 5px;
    height: 126px;
    background-color: #5b6673;
}

/* drawing */
.canvas {
    position: relative;
    flex: 1;
    min-width: 0;
    overflow: hidden;
    background-color: #000;
}
.plan {
    display: block;
    width: 100%;
    height: 100%;
}
.plan text {
    font-family: "Roboto Condensed", "Liberation Sans Narrow", "Liberation Sans", sans-serif;
    text-anchor: middle;
}
.base {
    fill: none;
    stroke: #d00000;
    stroke-width: 1.5;
    stroke-dasharray: 23 12;
}
.brown {
    fill: none;
    stroke: #6e2000;
    stroke-width: 1.5;
    stroke-dasharray: 32 13;
}
.dim-line {
    fill: none;
    stroke: #007858;
    stroke-width: 1.5;
}
.dim {
    fill: #b070e8;
    font-size: 14px;
}
.mark {
    fill: #c4a856;
    font-size: 29px;
    font-weight: 300;
}
.axis {
    fill: #fff;
    font-size: 23px;
}
.gizmo {
    font-size: 19px;
}
.view-bar {
    position: absolute;
    top: 0;
    right: 0;
    display: flex;
    flex-direction: column;
    align-items: center;
    gap: 6px;
    width: 40px;
    padding: 13px 0 15px;
    background-color: #989b9f;
    border-left: 1px solid #b5b7ba;
}
.view-bar button {
    display: flex;
    flex-direction: column;
    align-items: center;
    gap: 9px;
}
.view-bar .caret {
    margin: 0;
    background-color: #3b4654;
}
.view-bar hr {
    width: 28px;
    margin: 0;
    border: 0;
    border-top: 1px solid #666a70;
}

/* status bar */
.status {
    display: flex;
    align-items: center;
    height: 34px;
    padding-left: 40px;
    color: #444;
    background-color: #dddddf;
    border-top: 1px solid #b5b8bd;
    white-space: nowrap;
}
.status b {
    margin-left: 6px;
    font-weight: normal;
}
.coords {
    width: 288px;
}
.level {
    width: 104px;
}
.elev {
    width: 166px;
}
.zero {
    width: 129px;
}
.hidden-count {
    width: 129px;
}
.snap {
    display: flex;
    gap: 4px;
    align-self: flex-end;
}
.snap button {
    display: flex;
    align-items: center;
    justify-content: center;
    gap: 3px;
    min-width: 32px;
    height: 30px;
    padding: 0 5px;
    background-color: #d0d0d2;
    border: 1px solid #a9a9ab;
    border-bottom: 0;
}
.snap .wide {
    padding: 0 8px;
}
.snap .on {
    background-color: #fff;
    border-color: #4b9df0;
}
.hint {
    margin-left: 8px;
    color: #222;
}
.fps {
    margin-left: auto;
    padding-right: 44px;
}
```
